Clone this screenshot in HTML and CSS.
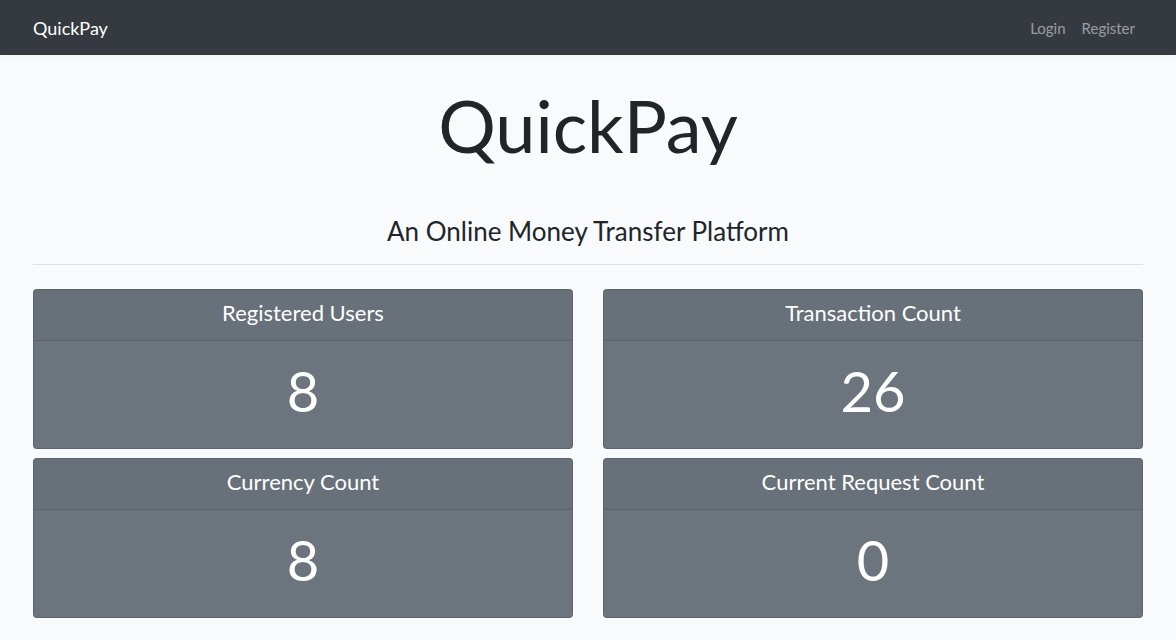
FILE: index.html
```html
<!DOCTYPE html>
<html lang="en">
<head>
<meta charset="utf-8">
<title>QuickPay</title>
<link rel="stylesheet" href="styles.css">
</head>
<body>
<nav class="navbar">
  <div class="nav-inner">
    <a class="brand" href="#">QuickPay</a>
    <ul class="nav-links">
      <li><a href="#">Login</a></li>
      <li><a href="#">Register</a></li>
    </ul>
  </div>
</nav>
<main class="container">
  <h1 class="title">QuickPay</h1>
  <h3 class="subtitle">An Online Money Transfer Platform</h3>
  <hr class="divider">
  <div class="grid">
    <div class="card">
      <div class="card-header">Registered Users</div>
      <div class="card-body">8</div>
    </div>
    <div class="card">
      <div class="card-header">Transaction Count</div>
      <div class="card-body">26</div>
    </div>
    <div class="card">
      <div class="card-header">Currency Count</div>
      <div class="card-body">8</div>
    </div>
    <div class="card">
      <div class="card-header">Current Request Count</div>
      <div class="card-body">0</div>
    </div>
  </div>
</main>
</body>
</html>
```
FILE: styles.css
```css
* { box-sizing: border-box; }
html, body { margin: 0; padding: 0; }
body {
  background: #f8fafc;
  color: #212529;
  font-family: Lato, "Open Sans", sans-serif;
  font-size: 14.4px;
  line-height: 1.6;
}
.navbar {
  background: #343a40;
  height: 55px;
  box-shadow: 0 2px 4px rgba(0,0,0,.04);
}
.nav-inner {
  width: 1140px;
  margin: 0 auto;
  padding: 0 15px;
  height: 100%;
  display: flex;
  align-items: center;
  justify-content: space-between;
}
.brand {
  color: #fff;
  font-size: 18px;
  text-decoration: none;
  line-height: 1;
}
.nav-links {
  list-style: none;
  margin: 0;
  padding: 0;
  display: flex;
}
.nav-links a {
  display: block;
  color: rgba(255,255,255,.5);
  text-decoration: none;
  padding: 0 8px;
  font-size: 15px;
}
.container {
  width: 1140px;
  margin: 0 auto;
  padding: 0 15px;
}
.title {
  margin: 27px 0 0;
  text-align: center;
  font-size: 72px;
  font-weight: 400;
  line-height: 1.2;
}
.subtitle {
  margin: 48px 0 0;
  text-align: center;
  font-size: 26px;
  font-weight: 400;
  line-height: 1.2;
}
.divider {
  margin: 16px 0 24px;
  border: 0;
  border-top: 1px solid rgba(0,0,0,.1);
}
.grid {
  display: grid;
  grid-template-columns: 1fr 1fr;
  column-gap: 30px;
  row-gap: 9px;
}
.card {
  background: #6c757d;
  border: 1px solid rgba(0,0,0,.125);
  border-radius: 4px;
  color: #fff;
  overflow: hidden;
}
.card-header {
  height: 51px;
  display: flex;
  align-items: center;
  justify-content: center;
  font-size: 22px;
  padding-bottom: 3px;
  border-bottom: 1px solid rgba(0,0,0,.125);
  background: rgba(0,0,0,.03);
}
.card-body {
  height: 107px;
  display: flex;
  align-items: center;
  justify-content: center;
  font-size: 56px;
  font-weight: 400;
  line-height: 1;
  padding-bottom: 6px;
}
```
